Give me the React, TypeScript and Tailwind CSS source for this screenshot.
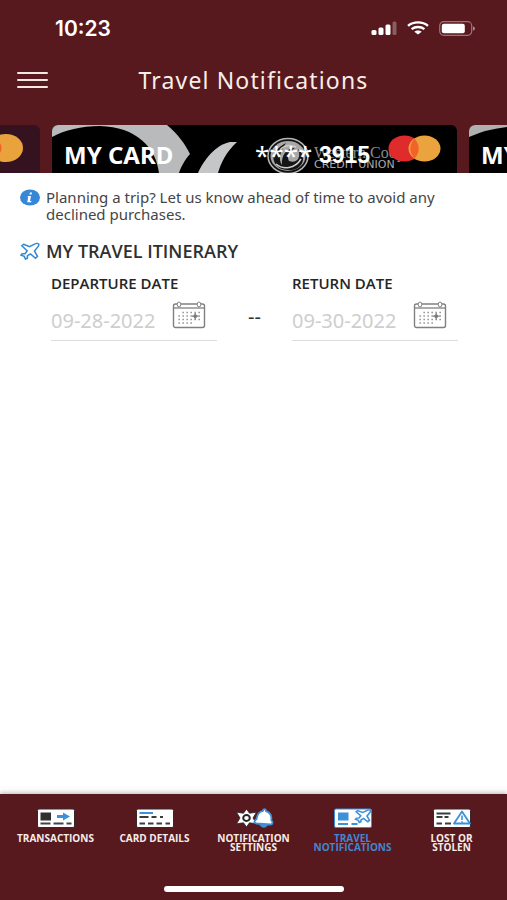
import React from "react";

function StatusIcons() {
  return (
    <div className="flex items-center gap-2.5">
      <svg width="26" height="14" viewBox="0 0 26 14" fill="#fff" aria-hidden="true">
        <rect x="0.5" y="9" width="5" height="5" rx="1.5" />
        <rect x="7.5" y="6.500" width="5" height="7.500" rx="1.500" />
        <rect x="14.500" y="3.500" width="5" height="10.500" rx="1.500" />
        <rect x="21.500" y="0.500" width="4" height="13.500" rx="1.500" opacity=".3" />
      </svg>
      <svg width="22" height="14" viewBox="0 0 22 14" fill="none" stroke="#fff" strokeWidth="2.4" aria-hidden="true">
        <path d="M1 4.800C6.500 .2 15.500 .2 21 4.800" />
        <path d="M4.600 8.100C8.200 5.200 13.800 5.200 17.400 8.100" />
        <path d="M11 13.600 7.300 10.700C9.200 9 12.800 9 14.700 10.700Z" fill="#fff" stroke="none" />
      </svg>
      <svg width="36" height="15" viewBox="0 0 36 15" aria-hidden="true">
        <rect x=".7" y=".7" width="32" height="13.600" rx="4" fill="none" stroke="#fff" strokeOpacity=".4" strokeWidth="1.200" />
        <rect x="2.800" y="2.700" width="23" height="9.600" rx="2" fill="#fff" />
        <path d="M34 5.200q2 1 2 2.300t-2 2.300Z" fill="#fff" opacity=".5" />
      </svg>
    </div>
  );
}

function PreviousCard() {
  return (
    <div className="h-12 w-10 shrink-0 overflow-hidden rounded-tr-md bg-[#34121f]">
      <svg width="40" height="48" viewBox="0 0 40 48" aria-hidden="true">
        <ellipse cx="6" cy="23" rx="17" ry="14" fill="#eaa23c" />
        <path d="M0 18q3 5 0 10Z" fill="#f06425" />
      </svg>
    </div>
  );
}

function CardArt() {
  return (
    <svg className="absolute top-0 left-0" width="260" height="48" viewBox="0 0 260 48" aria-hidden="true">
      <path d="M0 0H115C126 9 133 19 138 29C132 36 129 42 127 48H107C104 22 84 2 48 1C29 1 13 5 0 12Z" fill="#b8babc" />
      <path d="M185 17C174 27 169 38 166 48H146C152 35 163 20 178 17Z" fill="#c5c6c7" />
      <g transform="translate(236 31)">
        <ellipse rx="20" ry="17.500" fill="#111" stroke="#b5b5b5" strokeWidth="1.500" />
        <ellipse rx="17.500" ry="15" fill="#a8a8a8" />
        <path d="M-14 5C-17-4-6-11-2-13C-8-4-10 3-6 9C-7-1-1-8 7-8C0-4-1 1 1 5C8 8 14 2 10-7C20 1 14 13 4 14C-4 15-12 12-14 5Z" fill="#151515" />
        <path d="M-12 8C-5 14 7 13 13 3M-8-6C-3-12 4-11 8-9" fill="none" stroke="#ccc" strokeWidth="1.500" />
      </g>
    </svg>
  );
}

function NetworkMark() {
  return (
    <svg className="absolute top-2.5 right-4" width="53" height="27" viewBox="0 0 53 27" aria-hidden="true">
      <ellipse cx="16.500" cy="13.500" rx="16" ry="13" fill="#df2b2c" />
      <ellipse cx="36.500" cy="13.500" rx="16" ry="13" fill="#eaa33d" />
      <path d="M26.500 3.400Q35 13.500 26.500 23.600Q18 13.500 26.500 3.400Z" fill="#f16328" />
    </svg>
  );
}

function CalendarIcon() {
  return (
    <svg width="34" height="28" viewBox="0 0 34 28" fill="none" stroke="#808080" aria-hidden="true">
      <rect x="1.500" y="3" width="31" height="23.500" rx="2" strokeWidth="1.400" />
      <path d="M1.500 7h31" strokeWidth="1.300" />
      <ellipse cx="7" cy="3.500" rx="1.800" ry="2.500" fill="#fff" />
      <ellipse cx="27" cy="3.500" rx="1.800" ry="2.500" fill="#fff" />
      <path d="M10.500 11.500h18M6.500 15h22M6.500 18.500h22M6.500 22h16" strokeWidth="1.300" strokeDasharray="1.300 2.700" />
      <path d="M23.200 12v6.500M20 15.200h6.500" strokeWidth="1.200" />
      <circle cx="23.200" cy="15.200" r="1.500" fill="#777" />
    </svg>
  );
}

function DateField({ id, label, value }: { id: string; label: string; value: string }) {
  return (
    <div className="w-[166px]">
      <label htmlFor={id} className="block font-['Open_Sans',sans-serif] text-[15px] leading-5 font-semibold text-[#252525]">{label}</label>
      <div className="mt-2 flex h-10 items-start border-b border-[#ddd]">
        <input id={id} type="text" defaultValue={value} className="mt-2 h-6 w-[121px] bg-transparent text-xl leading-6 text-[#cecece] outline-none" />
        <button type="button" aria-label={`Choose ${label.toLowerCase()}`}><CalendarIcon /></button>
      </div>
    </div>
  );
}

const planePath = "M2.500 1.500 8.500 4.200 12.500 1.800Q16.500-.3 17.500 1Q18.500 2.500 16 5.500L13.500 9 16.500 15 14.500 17 9.500 12.300 6.500 14.300 6.300 17 4.500 18 3.200 15 0 13.500 1.200 12 4 12 6.200 8.800.8 3.200Z";

function TabIcon({ kind }: { kind: string }) {
  return (
    <svg width="40" height="22" viewBox="0 0 40 22" fill="none" aria-hidden="true">
      {kind !== "settings" && <rect x="1.500" y="1" width="37" height="18.500" rx="1.500" fill="#fff" stroke={kind === "travel" ? "#3b8fda" : "#36282a"} strokeWidth="1" />}
      {kind === "transactions" && <g>
        <rect x="4.500" y="4.500" width="10.500" height="8" fill="#303030" />
        <path d="M21 7h6V4.500l7 4-7 4V10h-6Z" fill="#3c91db" />
        <path d="M4.500 15.500h10M17.500 15.500h10M30.500 15.500h5" stroke="#444" strokeWidth="2" />
      </g>}
      {kind === "details" && <g strokeWidth="2">
        <path d="M4.500 5h13.500" stroke="#3c91db" />
        <path d="M4.500 9h9M16.500 9h5M25 9h3M4.500 15.500h5.500M13 15.500h5.500M21.500 15.500h5.500M30.500 15.500h4.500" stroke="#3c3c3c" />
      </g>}
      {kind === "settings" && <g>
        <path d="M12.500 1 15.500 5.200 22.500 4.200 19 10 22.500 15.800 15.500 14.800 12.500 19 9.500 14.800 2.500 15.800 6 10 2.500 4.200 9.500 5.200Z" fill="#fff" stroke="#262626" strokeWidth=".8" strokeLinejoin="round" />
        <ellipse cx="12.500" cy="10" rx="3.300" ry="3" fill="#fff" stroke="#262626" strokeWidth="2" />
        <path d="M22.500 15.500c-3.500-.8-2-2.800 0-4.500.8-5.200 3-7.500 6.500-8.200.2-2.500 3.300-2 3 .4 4.500 1.800 6 5 5.200 8.800 1.800 2 2 4.300-.7 4.500Z" fill="#fff" stroke="#3c91db" strokeWidth="1.800" />
        <path d="M26.500 17q3.500 4 6.500 0Z" fill="#3c91db" stroke="#3c91db" strokeWidth="1.600" />
      </g>}
      {kind === "travel" && <g>
        <rect x="5" y="4.500" width="10.500" height="8" fill="#3c91db" />
        <path d="M5 16h10M18.500 16h6" stroke="#3c91db" strokeWidth="1.800" />
        <path d={planePath} transform="translate(22.500 1.500) scale(.85 .72)" fill="#fff" stroke="#3c91db" strokeWidth="2" />
      </g>}
      {kind === "lost" && <g>
        <path d="M4.500 5.500h14M4.500 9h6M12.500 9h4M4.500 15.500h5.500M13 15.500h6" stroke="#3c3c3c" strokeWidth="2" />
        <path d="M30 3.500 38 15.500H22Z" fill="#fff" stroke="#3c91db" strokeWidth="1.800" strokeLinejoin="round" />
        <path d="M30 7.500v4.500M30 13.200v1.500" stroke="#3c91db" strokeWidth="1.600" />
      </g>}
    </svg>
  );
}

const tabs = [
  { kind: "transactions", lines: ["TRANSACTIONS"] },
  { kind: "details", lines: ["CARD DETAILS"] },
  { kind: "settings", lines: ["NOTIFICATION", "SETTINGS"] },
  { kind: "travel", lines: ["TRAVEL", "NOTIFICATIONS"] },
  { kind: "lost", lines: ["LOST OR", "STOLEN"] },
];

export default function App() {
  return (
    <div className="flex min-h-screen flex-col bg-white font-['Noto_Sans','Open_Sans',sans-serif]">
      <header className="overflow-hidden bg-[#57191e] text-white">
        <div className="flex h-14 items-center justify-between pr-8 pl-[55px]">
          <time className="pt-0.5 font-['Inter',sans-serif] text-[21px] leading-6 font-semibold">10:23</time>
          <StatusIcons />
        </div>
        <div className="grid h-[69px] grid-cols-[48px_1fr_48px] items-start pt-2">
          <button type="button" aria-label="Open menu" className="mt-2 ml-[17px] flex w-[31px] flex-col gap-[5px]">
            <span className="h-0.5 w-full rounded bg-[#f3e8df]" />
            <span className="h-0.5 w-full rounded bg-[#f3e8df]" />
            <span className="h-0.5 w-full rounded bg-[#f3e8df]" />
          </button>
          <h1 className="text-center text-[23px] leading-8 tracking-wider text-[#f8eee8]">Travel Notifications</h1>
        </div>
        <div className="flex gap-3">
          <PreviousCard />
          <section aria-label="Selected card" className="relative h-12 min-w-0 flex-1 overflow-hidden rounded-t-md bg-black">
            <CardArt />
            <div className="absolute top-[18px] left-[262px] whitespace-nowrap">
              <div className="font-['Liberation_Serif',serif] text-base leading-5 text-[#888]">Western Coop</div>
              <div className="-mt-1 font-['DejaVu_Sans',sans-serif] text-[11px] leading-3 text-[#aaa]">CREDIT UNION</div>
            </div>
            <NetworkMark />
            <div className="relative flex pt-4 pl-3 leading-7 font-bold">
              <span className="w-[191px] text-2xl leading-7">MY CARD</span>
              <span className="w-[64px] text-[26px] leading-7 font-normal">****</span>
              <span className="font-['Liberation_Sans',sans-serif] text-[23px] leading-7">3915</span>
            </div>
          </section>
          <div className="relative h-12 w-[38px] shrink-0 overflow-hidden rounded-tl-md bg-black">
            <svg className="absolute inset-0" width="38" height="48" aria-hidden="true"><path d="M0 0H38V2Q18 4 0 12Z" fill="#aeb0b2" /></svg>
            <span className="relative block pt-4 pl-3 text-2xl leading-7 font-bold whitespace-nowrap">MY</span>
          </div>
        </div>
      </header>

      <main className="flex-1 px-5 pt-4">
        <div className="flex items-start gap-1.5">
          <svg className="shrink-0" width="20" height="17" viewBox="0 0 20 17" aria-hidden="true"><ellipse cx="10" cy="8.500" rx="10" ry="8" fill="#3688d7" /><path d="M10 3.500h2l-.5 2h-2ZM8 7h3l-1 5h1.500l-.4 1.300H7.200L8.200 8.200H7.500Z" fill="#fff" /></svg>
          <p className="max-w-[420px] text-[15px] leading-[17px] text-[#454545]">Planning a trip? Let us know ahead of time to avoid any declined purchases.</p>
        </div>
        <div className="mt-4 flex items-center gap-1.5">
          <svg width="20" height="18" viewBox="-1 -1 20 20" preserveAspectRatio="none" fill="#fff" stroke="#3688d7" strokeWidth="1.600" aria-hidden="true"><path d={planePath} /></svg>
          <h2 className="font-['Open_Sans',sans-serif] text-lg leading-6 font-semibold text-[#303030]">MY TRAVEL ITINERARY</h2>
        </div>
        <div className="mt-2.5 ml-[31px] flex items-start">
          <DateField id="departure" label="DEPARTURE DATE" value="09-28-2022" />
          <span className="mt-8 w-[75px] text-center text-xl leading-6 text-[#333]">--</span>
          <DateField id="return" label="RETURN DATE" value="09-30-2022" />
        </div>
      </main>

      <footer className="bg-[#57191e] shadow-[0_-2px_4px_#9998]">
        <nav className="grid h-[92px] grid-cols-5 px-1.5 pt-3.5" aria-label="Card services">
          {tabs.map((tab) => (
            <a key={tab.kind} href={`#${tab.kind}`} aria-current={tab.kind === "travel" ? "page" : undefined} className={`flex flex-col items-center text-center font-['Open_Sans',sans-serif] text-[10px] leading-[9px] font-bold ${tab.kind === "travel" ? "text-[#4386cf]" : "text-[#f5ece8]"}`}>
              <TabIcon kind={tab.kind} />
              <span className="mt-1 whitespace-pre-line">{tab.lines.join("\n")}</span>
            </a>
          ))}
        </nav>
        <div className="mx-auto mb-2 h-[6px] w-[180px] rounded-full bg-white" />
      </footer>
    </div>
  );
}
